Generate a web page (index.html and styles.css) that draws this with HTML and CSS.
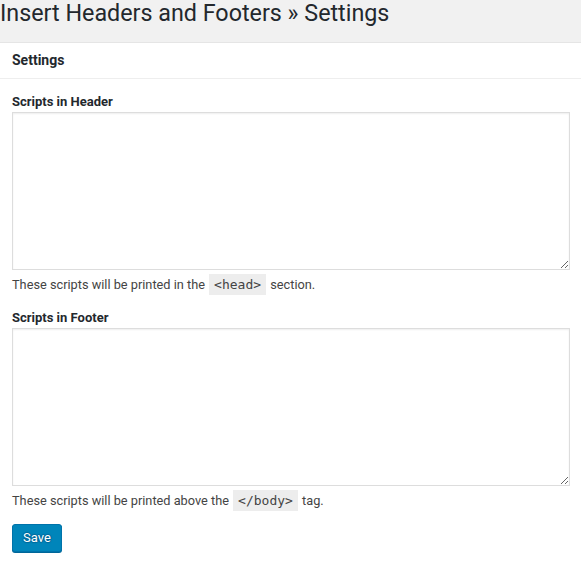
FILE: index.html
```html
<!DOCTYPE html>
<html>
<head>
<meta charset="utf-8">
<link rel="stylesheet" href="styles.css">
</head>
<body>
<div class="wrap">
  <h1 class="page-title">Insert Headers and Footers » Settings</h1>
  <div class="panel">
    <h3 class="panel-head">Settings</h3>
    <form class="panel-body">
      <label class="field-label" for="ihaf_insert_header">Scripts in Header</label>
      <textarea id="ihaf_insert_header" class="code-area"></textarea>
      <p class="desc">These scripts will be printed in the <code>&lt;head&gt;</code> section.</p>

      <label class="field-label" for="ihaf_insert_footer">Scripts in Footer</label>
      <textarea id="ihaf_insert_footer" class="code-area"></textarea>
      <p class="desc">These scripts will be printed above the <code>&lt;/body&gt;</code> tag.</p>

      <div class="actions"><button type="button" class="btn-primary">Save</button></div>
    </form>
  </div>
</div>
</body>
</html>
```

FILE: styles.css
```css
html, body {
  margin: 0;
  padding: 0;
}
body {
  background: #ffffff;
  font-family: Roboto, "Liberation Sans", sans-serif;
  color: #444;
  font-size: 13px;
}
.wrap {
  display: flex;
  flex-direction: column;
}
.page-title {
  margin: 0;
  background: #f1f1f1;
  height: 42px;
  box-sizing: border-box;
  padding: 0;
  font-size: 23.3px;
  font-weight: 400;
  line-height: 27px;
  color: #23282d;
  white-space: nowrap;
}
.panel {
  background: #fff;
  border-top: 1px solid #e5e5e5;
}
.panel-head {
  margin: 0;
  padding: 0 12px;
  height: 35px;
  line-height: 35px;
  font-size: 14px;
  font-weight: 700;
  color: #23282d;
  border-bottom: 1px solid #eee;
}
.panel-body {
  display: flex;
  flex-direction: column;
  align-items: flex-start;
  padding: 13px 12px 20px 12px;
}
.field-label {
  display: block;
  font-weight: 700;
  font-size: 13px;
  line-height: 18px;
  padding-top: 1px;
  margin-bottom: 1px;
  color: #23282d;
}
.code-area {
  display: block;
  box-sizing: border-box;
  width: 558px;
  height: 158px;
  margin: 0;
  border: 1px solid #ddd;
  box-shadow: inset 0 1px 2px rgba(0, 0, 0, 0.07);
  background: #fff;
  font-family: "Liberation Mono", monospace;
  font-size: 13px;
  padding: 2px 6px;
}
.desc {
  margin: 5px 0 13px 0;
  line-height: 20px;
  font-size: 12.75px;
  color: #444;
}
code {
  font-family: "DejaVu Sans Mono", monospace;
  font-size: 13px;
  background: rgba(0, 0, 0, 0.07);
  padding: 3px 5px 3px 5px;
  margin: 0 1px;
  color: #444;
}
.btn-primary {
  display: block;
  box-sizing: border-box;
  height: 28px;
  width: 50px;
  padding: 0 10px 2px;
  font-family: Roboto, "Liberation Sans", sans-serif;
  font-size: 13px;
  line-height: 26px;
  color: #fff;
  background: #0085ba;
  border: 1px solid #0073aa;
  border-radius: 3px;
  box-shadow: 0 1px 0 #006799;
  text-shadow: 0 -1px 1px #006799, 1px 0 1px #006799, 0 1px 1px #006799, -1px 0 1px #006799;
  cursor: pointer;
}
```
